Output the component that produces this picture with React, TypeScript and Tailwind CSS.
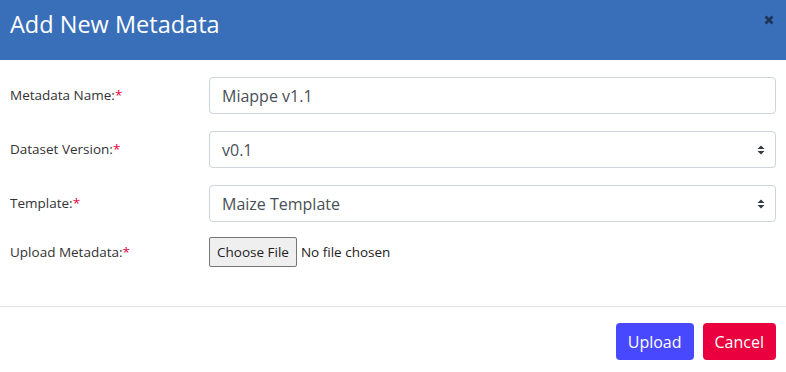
const font = { fontFamily: '"Open Sans", "Noto Sans", sans-serif' };

function Label({ text }: { text: string }) {
  return (
    <label className="w-[199px] shrink-0 text-[13.5px] text-[#333]">
      {text}
      <span className="text-[#e8003d]">*</span>
    </label>
  );
}

function SelectArrows() {
  return (
    <svg width="8" height="12" viewBox="0 0 8 12" className="text-[#343a40]">
      <path d="M0.5 5L4 1.5L7.5 5Z" fill="currentColor" />
      <path d="M0.5 7L4 10.5L7.5 7Z" fill="currentColor" />
    </svg>
  );
}

export default function App() {
  return (
    <div className="h-[372px] w-[786px] overflow-hidden bg-white" style={font}>
      <header className="flex h-[60px] items-start justify-between bg-[#396eb9] pl-[10px] pr-[12px]">
        <h1 className="mt-[10px] text-[23.5px] leading-[28px] text-white">Add New Metadata</h1>
        <button className="mt-[15px] text-[#1c3555]" aria-label="Close">
          <svg width="10" height="10" viewBox="0 0 10 10" className="block">
            <path d="M1.5 1.5L8.5 8.5M8.5 1.5L1.5 8.5" stroke="currentColor" strokeWidth="2.6" />
          </svg>
        </button>
      </header>

      <form className="flex flex-col gap-[17px] px-[10px] pt-[17px]">
        <div className="flex items-center">
          <Label text="Metadata Name:" />
          <input
            defaultValue="Miappe v1.1"
            className="h-[37px] flex-1 rounded-[4px] border border-[#ced4da] px-3 text-[16px] text-[#495057] outline-none"
          />
        </div>
        <div className="flex items-center">
          <Label text="Dataset Version:" />
          <div className="flex h-[37px] flex-1 items-center justify-between rounded-[4px] border border-[#ced4da] pl-3 pr-[10px] text-[16px] text-[#495057]">
            <span>v0.1</span>
            <SelectArrows />
          </div>
        </div>
        <div className="flex items-center">
          <Label text="Template:" />
          <div className="flex h-[37px] flex-1 items-center justify-between rounded-[4px] border border-[#ced4da] pl-3 pr-[10px] text-[16px] text-[#495057]">
            <span>Maize Template</span>
            <SelectArrows />
          </div>
        </div>
        <div className="-mt-[2px] flex items-center">
          <Label text="Upload Metadata:" />
          <div className="flex items-center gap-[4px] text-[13.5px] text-[#222]">
            <span className="rounded-[2px] border border-[#767676] bg-[#efefef] px-[7px] py-[4px]">
              Choose File
            </span>
            <span>No file chosen</span>
          </div>
        </div>
      </form>

      <div className="mt-[39px] border-t border-[#dee2e6]" />

      <footer className="flex justify-end gap-[9px] px-[10px] pt-[16px]">
        <button className="h-[37px] rounded-[4px] bg-[#4848fe] px-3 text-[16px] text-white">Upload</button>
        <button className="h-[37px] rounded-[4px] bg-[#ea003e] px-3 text-[16px] text-white">Cancel</button>
      </footer>
    </div>
  );
}
